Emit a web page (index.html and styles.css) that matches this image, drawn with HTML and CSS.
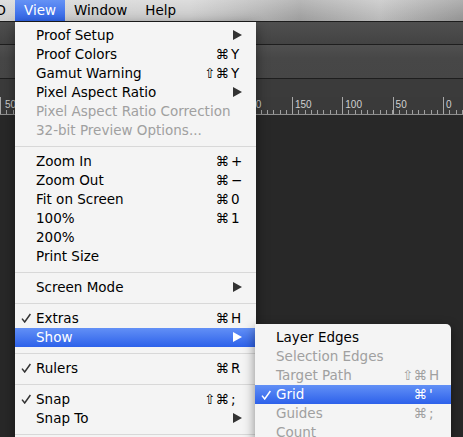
FILE: index.html
```html
<!DOCTYPE html>
<html>

<head>
    <meta charset="utf-8" />
    <title>View menu</title>
    <link rel="stylesheet" href="styles.css">
</head>

<body>
    <div class="app">
        <div class="menubar">
            <span class="mb-item first">3D</span>
            <span class="mb-item active">View</span>
            <span class="mb-item">Window</span>
            <span class="mb-item">Help</span>
        </div>
        <div class="panel options"></div>
        <div class="panel docbar"></div>
        <div class="panel tabs"></div>
        <div class="ruler">
            <div class="cell lead">
                <div class="num">50</div>
                <div class="ticks"></div>
            </div>
            <div class="cell">
                <div class="num">200</div>
                <div class="ticks"></div>
            </div>
            <div class="cell">
                <div class="num">150</div>
                <div class="ticks"></div>
            </div>
            <div class="cell">
                <div class="num">100</div>
                <div class="ticks"></div>
            </div>
            <div class="cell">
                <div class="num">50</div>
                <div class="ticks"></div>
            </div>
            <div class="cell">
                <div class="num">0</div>
                <div class="ticks"></div>
            </div>
        </div>
        <div class="canvas"></div>

        <div class="menu main">
            <div class="item"><span class="check"></span><span class="label">Proof Setup</span><svg class="arrow" viewBox="0 0 9 10"><polygon points="0,0 9,5 0,10" /></svg></div>
            <div class="item"><span class="check"></span><span class="label">Proof Colors</span><span class="mod">⌘</span><span class="key">Y</span></div>
            <div class="item"><span class="check"></span><span class="label">Gamut Warning</span><span class="mod">⇧⌘</span><span class="key">Y</span></div>
            <div class="item"><span class="check"></span><span class="label">Pixel Aspect Ratio</span><svg class="arrow" viewBox="0 0 9 10"><polygon points="0,0 9,5 0,10" /></svg></div>
            <div class="item disabled"><span class="check"></span><span class="label">Pixel Aspect Ratio Correction</span></div>
            <div class="item disabled"><span class="check"></span><span class="label">32-bit Preview Options...</span></div>
            <div class="sep"></div>
            <div class="item"><span class="check"></span><span class="label">Zoom In</span><span class="mod">⌘</span><span class="key">+</span></div>
            <div class="item"><span class="check"></span><span class="label">Zoom Out</span><span class="mod">⌘</span><span class="key">−</span></div>
            <div class="item"><span class="check"></span><span class="label">Fit on Screen</span><span class="mod">⌘</span><span class="key">0</span></div>
            <div class="item"><span class="check"></span><span class="label">100%</span><span class="mod">⌘</span><span class="key">1</span></div>
            <div class="item"><span class="check"></span><span class="label">200%</span></div>
            <div class="item"><span class="check"></span><span class="label">Print Size</span></div>
            <div class="sep"></div>
            <div class="item"><span class="check"></span><span class="label">Screen Mode</span><svg class="arrow" viewBox="0 0 9 10"><polygon points="0,0 9,5 0,10" /></svg></div>
            <div class="sep"></div>
            <div class="item"><svg class="check" viewBox="0 0 10 10"><path d="M1 5.6 L3.7 9 L9.4 1" /></svg><span class="label">Extras</span><span class="mod">⌘</span><span class="key">H</span></div>
            <div class="item hl"><span class="check"></span><span class="label">Show</span><svg class="arrow" viewBox="0 0 9 10"><polygon points="0,0 9,5 0,10" /></svg></div>
            <div class="sep"></div>
            <div class="item"><svg class="check" viewBox="0 0 10 10"><path d="M1 5.6 L3.7 9 L9.4 1" /></svg><span class="label">Rulers</span><span class="mod">⌘</span><span class="key">R</span></div>
            <div class="sep"></div>
            <div class="item"><svg class="check" viewBox="0 0 10 10"><path d="M1 5.6 L3.7 9 L9.4 1" /></svg><span class="label">Snap</span><span class="mod">⇧⌘</span><span class="key">;</span></div>
            <div class="item"><span class="check"></span><span class="label">Snap To</span><svg class="arrow" viewBox="0 0 9 10"><polygon points="0,0 9,5 0,10" /></svg></div>
            <div class="sep"></div>
        </div>

        <div class="menu sub">
            <div class="item"><span class="check"></span><span class="label">Layer Edges</span></div>
            <div class="item disabled"><span class="check"></span><span class="label">Selection Edges</span></div>
            <div class="item disabled"><span class="check"></span><span class="label">Target Path</span><span class="mod">⇧⌘</span><span class="key">H</span></div>
            <div class="item hl"><svg class="check" viewBox="0 0 10 10"><path d="M1 5.6 L3.7 9 L9.4 1" /></svg><span class="label">Grid</span><span class="mod">⌘</span><span class="key">'</span></div>
            <div class="item disabled"><span class="check"></span><span class="label">Guides</span><span class="mod">⌘</span><span class="key">;</span></div>
            <div class="item disabled"><span class="check"></span><span class="label">Count</span></div>
        </div>
    </div>
</body>

</html>
```

FILE: styles.css
```css
* {
    box-sizing: border-box;
    padding: 0;
    margin: 0;
}

body {
    width: 463px;
    height: 437px;
    overflow: hidden;
    background: #282828;
    font-family: 'DejaVu Sans', 'Liberation Sans', sans-serif;
    font-size: 13.5px;
}

.app {
    position: relative;
    height: 437px;
    overflow: hidden;
}

/* top menu bar */
.menubar {
    display: flex;
    height: 22px;
    line-height: 21px;
    border-bottom: 1px solid #1c1c1c;
    background: linear-gradient(rgba(255, 255, 255, 0.2), rgba(0, 0, 0, 0.06)),
        linear-gradient(to right, #d8d8d8 0, #d4d4d4 190px, #b8b8b8 260px, #a6a6a6 300px, #c4c4c4 380px, #b0b0b0 420px, #9c9c9c 463px);
    color: #000;
    white-space: nowrap;
}

.mb-item {
    padding: 0 9px;
}

.mb-item.first {
    margin-left: -22px;
}

.mb-item.active {
    background: linear-gradient(#6592f5, #2f63e6);
    color: #fff;
}

/* dark panels behind the menu */
.panel {
    border-bottom: 1px solid #1e1e1e;
}

.options {
    height: 23px;
    background: linear-gradient(#4f4f4f, #434343);
}

.docbar {
    height: 34px;
    background: linear-gradient(#505050, #474747 40%, #464646);
}

.tabs {
    height: 18px;
    border-bottom: none;
    background: #3b3b3b;
}

.ruler {
    display: flex;
    height: 18px;
    background: #3a3a3a;
    border-bottom: 1px solid #8e8e8e;
}

.cell {
    display: flex;
    flex-direction: column;
    justify-content: space-between;
    flex: 0 0 50.3px;
    height: 17px;
    padding-top: 3px;
    border-left: 1px solid #a8a8a8;
}

.cell.lead {
    flex: 0 0 241.7px;
}

.num {
    padding-left: 2px;
    font-family: 'Liberation Sans', sans-serif;
    font-size: 10px;
    line-height: 10px;
    color: #d0d0d0;
}

.lead .num {
    padding-left: 4px;
}

.ticks {
    height: 4px;
    background: repeating-linear-gradient(to right, transparent 0, transparent 5.29px, #a0a0a0 5.29px, #a0a0a0 6.29px);
}

.canvas {
    height: 330px;
    background: #282828;
}

/* dropdown menus */
.menu {
    position: absolute;
    background: #f4f4f4;
    color: #000;
    white-space: nowrap;
    box-shadow: 0 4px 12px rgba(0, 0, 0, 0.45);
}

.main {
    left: 15px;
    top: 22px;
    width: 241px;
    padding: 3.5px 0 20px;
}

.sub {
    left: 255px;
    top: 324px;
    width: 196px;
    padding: 4px 0 20px;
    border-radius: 0 5px 0 0;
}

.item {
    display: flex;
    align-items: center;
    height: 19px;
    line-height: 19px;
    padding: 0 14px 0 6px;
}

.sub .item {
    padding-right: 11px;
}

.check {
    flex: 0 0 15px;
    width: 15px;
    height: 10px;
    padding-right: 5px;
    fill: none;
    stroke: #333;
    stroke-width: 1.5;
}

.label {
    flex: 1;
}

.mod {
    text-align: right;
}

.key {
    width: 13px;
    padding-left: 2px;
}

.arrow {
    width: 9px;
    height: 10px;
    fill: #333;
}

.disabled {
    color: #a0a0a0;
}

.hl {
    background: linear-gradient(#6290f6, #2d61ea);
    color: #fff;
}

.hl .check {
    stroke: #fff;
}

.hl .arrow {
    fill: #fff;
}

.sep {
    height: 1px;
    margin: 6px 0 5px;
    background: #d8d8d8;
}
```
